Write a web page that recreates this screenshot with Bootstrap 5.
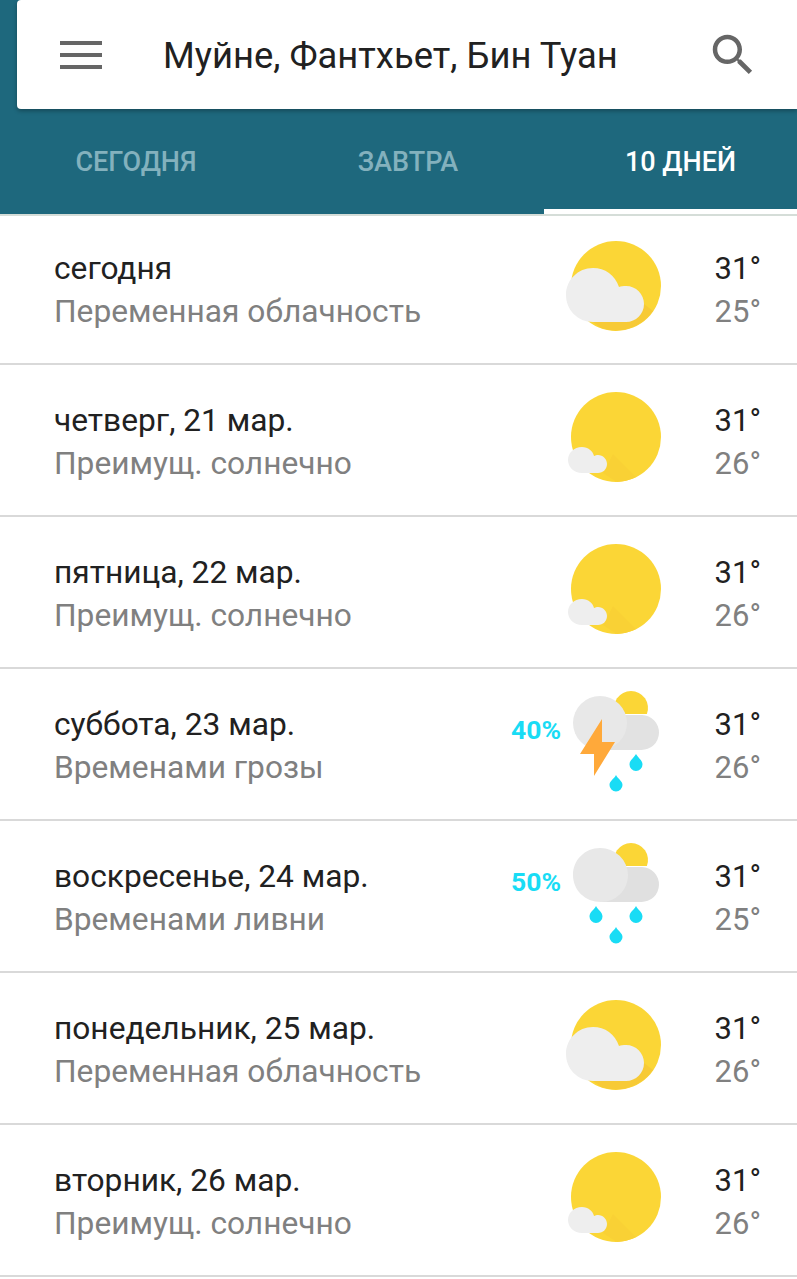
<!DOCTYPE html>
<html lang="ru">
  <head>
    <meta charset="utf-8" />
    <title>Погода</title>
    <link
      href="https://cdn.jsdelivr.net/npm/bootstrap@5.3.3/dist/css/bootstrap.min.css"
      rel="stylesheet"
    />
    <style>
      body { font-family: Roboto, "Liberation Sans", sans-serif; background: #fff; color: #212121; overflow: hidden; }
      .top-head { background: #1e687d; height: 214px; }
      .head-line { height: 2px; background: #d5ddd8; }
      .search-card { height: 109px; margin-left: 17px; border: 0; border-radius: 4px 0 0 4px; box-shadow: 0 2px 4px rgba(0,0,0,.3); }
      .menu-btn { width: 42px; margin-left: 43px; margin-right: 61px; margin-top: 1px; }
      .menu-btn span { display: block; height: 4px; background: #666; margin: 0 0 8px; }
      .menu-btn span:last-child { margin-bottom: 0; }
      .place-name { font-size: 36.4px; color: #212121; padding-top: 3px; }
      .search-ico { width: 54px; height: 54px; margin-left: auto; margin-right: 37px; fill: #666; }
      .day-tabs { display: grid; grid-template-columns: 272px 272px 1fr; height: 105px; }
      .day-tabs .nav-link { color: #83b1bd; font-size: 27px; font-weight: 500; height: 105px; padding: 2px 0 0; display: flex; align-items: center; justify-content: center; }
      .day-tabs .nav-link.active { color: #fff; border-bottom: 5px solid #fff; padding: 7px 0 0 20px; }
      #days > .day-row { height: 152px; border-width: 0 0 2px; border-style: solid; border-color: #d9d9d9; padding: 4px 36px 0 54px; }
      #days > .day-row.first-row { height: 149px; padding-top: 0; }
      .first-row .wx-ico { margin-top: -8px; }
      .day-title { font-size: 31.7px; line-height: 43px; color: #212121; }
      .day-sub { font-size: 31.7px; line-height: 43px; color: #808080; }
      .rain-pct { font-size: 26.5px; font-weight: 700; color: #19dcf5; margin-right: -4px; margin-bottom: 32px; }
      .wx-ico { width: 110px; height: 110px; margin-left: 4px; margin-top: -10px; }
      .temps { width: 47px; margin-left: 43px; text-align: right; }
      .temp-hi { font-size: 31px; line-height: 43px; color: #212121; }
      .temp-lo { font-size: 31px; line-height: 43px; color: #808080; }
    </style>
  </head>
  <body>
    <svg width="0" height="0" class="position-absolute">
      <defs>
        <symbol id="wx-partly" viewBox="0 0 110 110">
          <circle cx="55" cy="55" r="45" fill="#fbd636" />
          <path d="M83 73 L92 80 A45 45 0 0 1 40 97 L32 91 Z" fill="#f7ca36" />
          <path d="M32 37 C44 37 54 44 58 56 C60 55 62 55 65 55 C75 55 83 63 83 73 C83 83 75 91 65 91 L32 91 C17 91 5 79 5 64 C5 49 17 37 32 37 Z" fill="#eeeeee" />
        </symbol>
        <symbol id="wx-sunny" viewBox="0 0 110 110">
          <circle cx="55" cy="55" r="45" fill="#fbd636" />
          <path d="M44 88 L42 91 L56 100 A45 45 0 0 0 75 95 L52 72 Z" fill="#f9d135" />
          <path d="M21 65 C27 65 32 69 33 74 C34 73.500 36 73 37 73 C42 73 46 77 46 82 C46 87 42 91 37 91 L21 91 C13 91 7 85 7 78 C7 71 13 65 21 65 Z" fill="#eeeeee" />
        </symbol>
        <symbol id="wx-storm" viewBox="0 0 110 110">
          <path d="M54.100 28 A17 17 0 1 1 85.900 28 Z" fill="#fbd636" />
          <path d="M53 29 H81 A17.500 17.500 0 0 1 80 64 H40 Z" fill="#e2e2e2" />
          <circle cx="39" cy="37" r="27" fill="#e8e8e8" />
          <path d="M41 33 L19 68 H33 V90 L54 56 H41 Z" fill="#ffa93a" />
          <path d="M75 68 C77 72 81.500 74 81.500 78.500 A6.500 6.500 0 0 1 68.500 78.500 C68.500 74 73 72 75 68 Z" fill="#19dcf5" />
          <path d="M55 89 C57 93 61.500 95 61.500 99 A6.500 6.500 0 0 1 48.500 99 C48.500 95 53 93 55 89 Z" fill="#19dcf5" />
        </symbol>
        <symbol id="wx-showers" viewBox="0 0 110 110">
          <path d="M54.100 28 A17 17 0 1 1 85.900 28 Z" fill="#fbd636" />
          <path d="M53 29 H81 A17.500 17.500 0 0 1 80 64 H40 Z" fill="#e0e0e0" />
          <path d="M39 10 A27.500 27.500 0 0 1 67 37 C67 52 55 64 40 64 C24 64 12 52 12 37 C12 22 24 10 39 10 Z" fill="#e8e8e8" />
          <path d="M35 68 C37 72 41.500 74 41.500 78.500 A6.500 6.500 0 0 1 28.500 78.500 C28.500 74 33 72 35 68 Z" fill="#19dcf5" />
          <path d="M75 68 C77 72 81.500 74 81.500 78.500 A6.500 6.500 0 0 1 68.500 78.500 C68.500 74 73 72 75 68 Z" fill="#19dcf5" />
          <path d="M55 89 C57 93 61.500 95 61.500 99 A6.500 6.500 0 0 1 48.500 99 C48.500 95 53 93 55 89 Z" fill="#19dcf5" />
        </symbol>
      </defs>
    </svg>

    <div class="top-head">
      <div class="card search-card flex-row align-items-center">
        <div class="menu-btn"><span></span><span></span><span></span></div>
        <div class="place-name">Муйне, Фантхьет, Бин Туан</div>
        <svg class="search-ico" viewBox="0 0 24 24">
          <path d="M15.5 14h-.79l-.28-.27C15.41 12.59 16 11.11 16 9.5 16 5.91 13.09 3 9.5 3S3 5.91 3 9.5 5.91 16 9.5 16c1.61 0 3.09-.59 4.23-1.57l.27.28v.79l5 4.99L20.49 19l-4.99-5zm-6 0C7.01 14 5 11.99 5 9.5S7.01 5 9.5 5 14 7.01 14 9.5 11.99 14 9.5 14z" />
        </svg>
      </div>
      <ul class="nav day-tabs">
        <li class="nav-item"><a class="nav-link" href="#">СЕГОДНЯ</a></li>
        <li class="nav-item"><a class="nav-link" href="#">ЗАВТРА</a></li>
        <li class="nav-item"><a class="nav-link active" href="#">10 ДНЕЙ</a></li>
      </ul>
    </div>
    <div class="head-line"></div>

    <div class="list-group list-group-flush" id="days"></div>

    <script>
      let allDays = [
        { title: "сегодня", sub: "Переменная облачность", icon: "wx-partly", hi: 31, lo: 25 },
        { title: "четверг, 21 мар.", sub: "Преимущ. солнечно", icon: "wx-sunny", hi: 31, lo: 26 },
        { title: "пятница, 22 мар.", sub: "Преимущ. солнечно", icon: "wx-sunny", hi: 31, lo: 26 },
        { title: "суббота, 23 мар.", sub: "Временами грозы", icon: "wx-storm", pct: "40%", hi: 31, lo: 26 },
        { title: "воскресенье, 24 мар.", sub: "Временами ливни", icon: "wx-showers", pct: "50%", hi: 31, lo: 25 },
        { title: "понедельник, 25 мар.", sub: "Переменная облачность", icon: "wx-partly", hi: 31, lo: 26 },
        { title: "вторник, 26 мар.", sub: "Преимущ. солнечно", icon: "wx-sunny", hi: 31, lo: 26 },
      ];
      let content = "";
      allDays.forEach((day, i) => {
        content += `<div class="list-group-item day-row d-flex align-items-center ${i == 0 ? "first-row" : ""}">
          <div class="flex-grow-1">
            <div class="day-title">${day.title}</div>
            <div class="day-sub">${day.sub}</div>
          </div>
          ${day.pct ? `<div class="rain-pct">${day.pct}</div>` : ""}
          <svg class="wx-ico"><use href="#${day.icon}" /></svg>
          <div class="temps">
            <div class="temp-hi">${day.hi}°</div>
            <div class="temp-lo">${day.lo}°</div>
          </div>
        </div>`;
      });
      document.getElementById("days").innerHTML = content;
    </script>
  </body>
</html>
